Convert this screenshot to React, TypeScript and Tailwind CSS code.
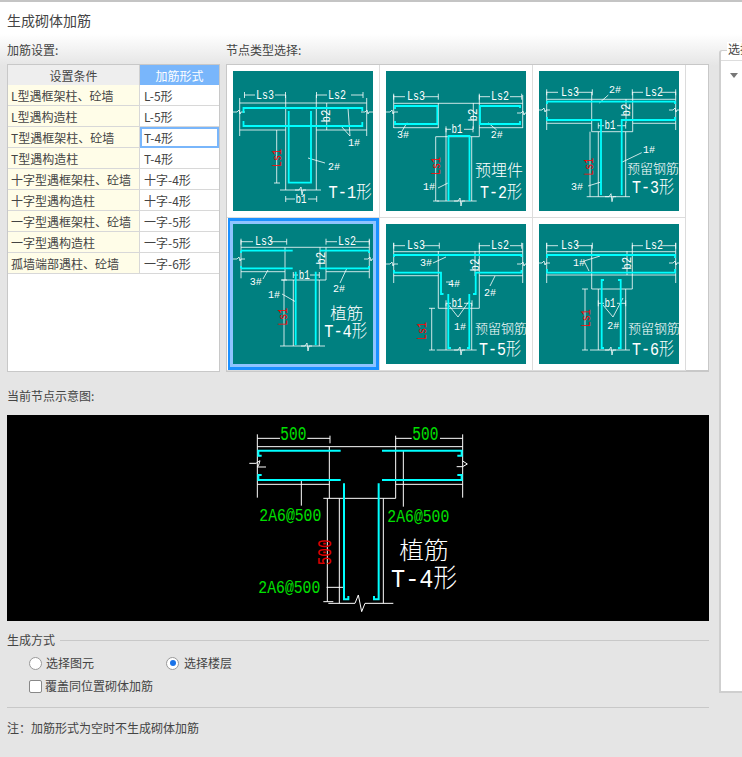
import React from 'react';

const ROWS = [
  ['L型遇框架柱、砼墙', 'L-5形'],
  ['L型遇构造柱', 'L-5形'],
  ['T型遇框架柱、砼墙', 'T-4形'],
  ['T型遇构造柱', 'T-4形'],
  ['十字型遇框架柱、砼墙', '十字-4形'],
  ['十字型遇构造柱', '十字-4形'],
  ['一字型遇框架柱、砼墙', '一字-5形'],
  ['一字型遇构造柱', '一字-5形'],
  ['孤墙端部遇柱、砼墙', '一字-6形'],
];

interface LabelProps {
  x: number;
  y: number;
  w: number;
  s?: number;
  c?: string;
  rot?: boolean;
  cjk?: boolean;
  children: string;
}

// every diagram label is real text, squeezed to the width it has in the picture
const Label: React.FC<LabelProps> = ({ x, y, w, s = 13, c = '#fff', rot, cjk, children }) => (
  <text
    x={x}
    y={y}
    fill={c}
    fontSize={s}
    fontWeight={cjk ? 300 : 400}
    fontFamily={cjk ? '"Liberation Mono", "Noto Sans CJK SC", monospace' : '"Liberation Mono", monospace'}
    textAnchor="middle"
    dominantBaseline="central"
    textLength={w}
    lengthAdjust="spacingAndGlyphs"
    transform={rot ? `rotate(-90 ${x} ${y})` : undefined}
  >
    {children}
  </text>
);

const hDim = (x1: number, x2: number, y: number, gapA: number, gapB: number) =>
  `M${x1} ${y - 3}V${y + 3}M${x2} ${y - 3}V${y + 3}M${x1} ${y}H${gapA}M${gapB} ${y}H${x2}`;

const brk = (x: number, y: number) => `M${x - 5} ${y}H${x - 1}L${x + 1} ${y - 3}L${x + 2} ${y + 5}L${x + 3} ${y}H${x + 6}`;
const sideBrk = (x: number, y: number) => `M${x - 6} ${y}H${x - 2}L${x} ${y - 2}L${x + 1} ${y + 2}L${x + 2} ${y}H${x + 6}`;

interface TileProps {
  white: string;
  cyan: string;
  children: React.ReactNode;
}

const Tile: React.FC<TileProps> = ({ white, cyan, children }) => (
  <svg width="140" height="140" viewBox="0 0 140 140" className="block bg-[#008080]">
    <path d={white} fill="none" stroke="#fff" strokeWidth="0.8" />
    <path d={cyan} fill="none" stroke="#00ffff" strokeWidth="1.8" />
    {children}
  </svg>
);

const Tiles = [
  <Tile
    key="t1"
    white={`${hDim(11.5, 52.5, 24, 22, 42)}${hDim(83.5, 130, 24, 94, 118)}M6.7 27V65M133.7 27V65M6.7 32H133.7M6.7 59H52.7M83.3 59H133.7M52.7 24V119M83.3 24V119M47 119H88M93.7 32V59M115 37L117 65M108 55L117 65M75 87L92 92M43.7 59V112M41 112H47${hDim(52.7, 83.7, 128, 62, 75)}${brk(67, 119)}${sideBrk(6, 41)}${sideBrk(134, 41)}`}
    cyan="M10.5 42V37H129.3V40M129.3 51V55H10.5V50M55.7 40V111.7H78V40"
  >
    <Label x={32} y={24} w={18}>Ls3</Label>
    <Label x={104} y={24} w={18}>Ls2</Label>
    <Label x={93.7} y={45} w={13} rot>b2</Label>
    <Label x={121} y={72} w={12} s={11}>1#</Label>
    <Label x={101} y={96} w={12} s={11}>2#</Label>
    <Label x={44} y={87} w={18} c="#f00" rot>Ls1</Label>
    <Label x={68} y={128} w={11}>b1</Label>
    <Label x={117} y={122} w={43} s={18} cjk>T-1形</Label>
  </Tile>,
  <Tile
    key="t2"
    white={`${hDim(7.7, 52.3, 25.7, 19, 37)}${hDim(93.3, 135.7, 25.7, 104, 124)}M7.7 24V57M136.7 24V57M7.7 32.3H136.7M52.3 32V57M93.3 24V65.7M7.7 56.7H52.3M93.3 56.7H136.7M49.7 65.7H93.3M60 57V130M85.7 65.7V130M50.7 130H90.7M49.7 65.7V130M47 130H53${hDim(60, 87, 58.3, 65, 78)}M87.3 32V58M21 51.7L15.7 60.7M102 51.7L110.7 59M62 112L52 117${brk(73, 130)}${sideBrk(6, 41)}${sideBrk(137, 42)}`}
    cyan="M9 38V35H51.3V53H9V50M134 37V35H94V53H134V50M62.5 130V65H83.5V130"
  >
    <Label x={30} y={25.7} w={18}>Ls3</Label>
    <Label x={114} y={25.7} w={18}>Ls2</Label>
    <Label x={87} y={44} w={13} rot>b2</Label>
    <Label x={71} y={58.3} w={11}>b1</Label>
    <Label x={17} y={64} w={12} s={11}>3#</Label>
    <Label x={110.7} y={64} w={12} s={11}>2#</Label>
    <Label x={50.7} y={95} w={18} c="#f00" rot>Ls1</Label>
    <Label x={43} y={115.7} w={12} s={11}>1#</Label>
    <Label x={113} y={101.3} w={48} s={16} cjk>预埋件</Label>
    <Label x={115} y={121.7} w={42} s={18} cjk>T-2形</Label>
  </Tile>,
  <Tile
    key="t3"
    white={`${hDim(7.7, 53.3, 21.3, 19, 37)}${hDim(93.3, 136.7, 21.3, 104, 122)}M7.7 20.7V59M136.7 20.7V59M7.7 28.3H136.7M52.7 21V60.7M93.7 21V60.7M7.7 52.3H52.7M93.7 52.3H136.7M52.7 60.7H93.7M59.3 60.7V125.7M86.7 60.7V125.7M47.7 125.7H91M51 60.7V125.7${hDim(59.3, 86.7, 54.7, 65, 78)}M87 28V52M69.3 24L60.3 32M82.7 91.3L102.7 81.7M49 115L62 111${brk(71, 125.7)}${sideBrk(5, 39)}${sideBrk(136, 39)}`}
    cyan="M8 33V30.7H136V33M8 46V49H62V124M136 46V49H82.7V124"
  >
    <Label x={31} y={21.3} w={18}>Ls3</Label>
    <Label x={115} y={21.3} w={18}>Ls2</Label>
    <Label x={76} y={19} w={12} s={11}>2#</Label>
    <Label x={87} y={39} w={13} rot>b2</Label>
    <Label x={71} y={54.7} w={11}>b1</Label>
    <Label x={110} y={79} w={12} s={11}>1#</Label>
    <Label x={38} y={116} w={12} s={11}>3#</Label>
    <Label x={50.3} y={95.7} w={18} c="#f00" rot>Ls1</Label>
    <Label x={114} y={98.3} w={52} s={13} cjk>预留钢筋</Label>
    <Label x={114} y={116.7} w={42} s={18} cjk>T-3形</Label>
  </Tile>,
  <Tile
    key="t4"
    white={`${hDim(8, 53.7, 17.7, 20, 37)}${hDim(93, 136.3, 17.7, 104, 122)}M8 16V54.3M136.3 16V54.3M8 23.3H136.3M52 23.3V56M87 23.3V45M93 23.3V56M8 47.7H52M93 47.7H136.3M48.7 56H93M60.3 56V122M86.3 56V122M47 122H92M51 56V122M48 56H54M35 46L30 55M114 44L107 59M49 70L63 78${hDim(60.3, 86.3, 51, 65, 77)}${brk(73, 122)}${sideBrk(6, 35)}${sideBrk(137, 35)}`}
    cyan="M8 26.7H59.7M87 26.7H136.3M8 44.3H59.7M87 44.3H136.3M8 29V26.7M8 42V44.3M136 29V26.7M136 42V44.3M62.7 47.7V121M82.7 47.7V121"
  >
    <Label x={31} y={17.7} w={18}>Ls3</Label>
    <Label x={114} y={17.7} w={18}>Ls2</Label>
    <Label x={88.7} y={34.3} w={13} rot>b2</Label>
    <Label x={71.3} y={51} w={11}>b1</Label>
    <Label x={22.7} y={57.7} w={12} s={11}>3#</Label>
    <Label x={106} y={65} w={12} s={11}>2#</Label>
    <Label x={41} y={71} w={12} s={11}>1#</Label>
    <Label x={50.3} y={92.7} w={18} c="#f00" rot>Ls1</Label>
    <Label x={113.7} y={91} w={33} s={16} cjk>植筋</Label>
    <Label x={112.7} y={108.3} w={43} s={18} cjk>T-4形</Label>
  </Tile>,
  <Tile
    key="t5"
    white={`${hDim(7.7, 53.3, 21.7, 19, 37)}${hDim(93.3, 135.7, 21.7, 104, 124)}M7.7 19V59M136.7 19V59M7.7 27.7H136.7M52.3 27V84.3M93.3 21V84.3M7.7 51.7H52.3M93.3 51.7H136.7M52.3 84.3H93.3M60 79.3V126M85.7 79.3V126M50.7 126H90.7M45.7 84.3V126M43 84.3H49M43 126H49M47 39L60 33M60 58H64M61 79L72 93L84 76M109 52L104 62M89 27V52${hDim(60, 86, 79.3, 65, 78)}${brk(73, 126)}${sideBrk(6, 40)}${sideBrk(137, 40)}`}
    cyan="M8 33V31H135.5V33M8 46V48.7H55V70H57.5M135.5 46V48.7H89.7V70H87M62.3 70V124H65M83.3 70V124H81"
  >
    <Label x={30} y={21.7} w={18}>Ls3</Label>
    <Label x={114} y={21.7} w={18}>Ls2</Label>
    <Label x={89} y={41} w={13} rot>b2</Label>
    <Label x={71} y={79.3} w={11}>b1</Label>
    <Label x={40} y={39.3} w={12} s={11}>3#</Label>
    <Label x={68} y={60.3} w={12} s={11}>4#</Label>
    <Label x={104} y={69.3} w={12} s={11}>2#</Label>
    <Label x={74} y={102.7} w={12} s={11}>1#</Label>
    <Label x={36.3} y={107} w={18} c="#f00" rot>Ls1</Label>
    <Label x={115} y={105} w={52} s={13} cjk>预留钢筋</Label>
    <Label x={114} y={126} w={42} s={18} cjk>T-5形</Label>
  </Tile>,
  <Tile
    key="t6"
    white={`${hDim(7.7, 53.3, 21.7, 19, 37)}${hDim(93.3, 136.7, 21.7, 104, 122)}M7.7 19V59M136.7 19V59M7.7 27.7H136.7M7.7 51H136.7M52.7 21V65M93.3 21V65M88 27V51M52.7 65H93.3M59.3 65V126M86.7 65V126M51 126H91M46 65V126M43 65H49M43 126H49M50 47L45 37M45 37L61 32M64 81L74 93L84 74${hDim(59.3, 86.7, 79.3, 65, 78)}${brk(71, 126)}${sideBrk(5, 39)}${sideBrk(136, 39)}`}
    cyan="M8 34V31H136V34M8 45V48.7H136V45M65 56H62.7V124H65M79 56H81.7V124H79"
  >
    <Label x={31} y={21.7} w={18}>Ls3</Label>
    <Label x={115} y={21.7} w={18}>Ls2</Label>
    <Label x={88.3} y={39.3} w={13} rot>b2</Label>
    <Label x={71} y={79.3} w={11}>b1</Label>
    <Label x={40} y={39.3} w={12} s={11}>1#</Label>
    <Label x={74.3} y={102} w={12} s={11}>2#</Label>
    <Label x={47.7} y={94.3} w={18} c="#f00" rot>Ls1</Label>
    <Label x={115} y={105} w={52} s={13} cjk>预留钢筋</Label>
    <Label x={114} y={126} w={42} s={18} cjk>T-6形</Label>
  </Tile>,
];

const Preview = () => (
  <svg width="702" height="206" viewBox="0 0 702 206" className="block bg-black">
    <g transform="translate(223 0) scale(0.33333)">
      <path
        d="M82 95H698M82 58V248M698 58V248M298 95V250M497 62V250M82 208H298M497 208H698M280 250H497M328 250V565M460 250V565M295 565H375L385 540L395 590L405 565H490M292 250V560M280 560H310M82 70H150M232 70H300M300 62V85M497 70H545M630 70H698M214 197V272M520 108V275M290 517H342M58 145H78L90 137L86 150L82 156H108M680 155H698L712 147L698 138"
        fill="none"
        stroke="#fff"
        strokeWidth="3"
      />
      <path
        d="M95 122H85V107H332M456 107H695V122H682M95 180H85V195H332M456 195H695V180H682M342 205V553H355V543M446 205V553H432V543"
        fill="none"
        stroke="#00ffff"
        strokeWidth="6"
      />
      <Label x={190} y={60} w={78} s={62} c="#00e000">500</Label>
      <Label x={586} y={58} w={78} s={62} c="#00e000">500</Label>
      <Label x={181} y={304} w={186} s={54} c="#00e000">2A6@500</Label>
      <Label x={565} y={306} w={186} s={54} c="#00e000">2A6@500</Label>
      <Label x={178} y={520} w={186} s={54} c="#00e000">2A6@500</Label>
      <Label x={287} y={412} w={78} s={62} c="#e00000" rot>500</Label>
      <Label x={582} y={412} w={148} s={72} cjk>植筋</Label>
      <Label x={582} y={495} w={198} s={80} cjk>T-4形</Label>
    </g>
  </svg>
);

const App: React.FC = () => {
  return (
    <div className="relative h-[757px] w-[742px] overflow-hidden border-t-2 border-[#c4c4c4] bg-[linear-gradient(#fff_0,#fff_32px,#e5e5e5_64px)] font-['Noto_Sans_CJK_SC',sans-serif] text-xs text-[#444]">
      <div className="flex h-[37px] items-center pb-[2px] pl-[7px] text-sm">生成砌体加筋</div>
      <div className="flex">
        <div className="ml-[7px] w-[702px] shrink-0">
          <div className="flex gap-[6px]">
            <div className="w-[213px] shrink-0">
              <div className="flex h-[25px] items-center pb-[3px]">加筋设置:</div>
              <div className="h-[308px] border border-[#c8c8c8] bg-white">
                <div className="flex h-[20px] text-center">
                  <div className="w-[132px] border-r border-[#d0d0d0] bg-[#eeeeee] leading-[22px]">设置条件</div>
                  <div className="flex-1 bg-[#79b6fb] leading-[22px] text-white">加筋形式</div>
                </div>
                {ROWS.map(([a, b], i) => (
                  <div key={a} className="flex h-[21px] border-b border-[#d8d8d8]">
                    <div className="w-[132px] truncate border-r border-[#d8d8d8] bg-[#fffde8] pl-[3px] leading-[22px]">{a}</div>
                    <div className={i === 2 ? 'mb-[-1px] flex-1 border-2 border-[#79b6fb] pl-[2px] leading-[18px]' : 'flex-1 pl-1 leading-[22px]'}>{b}</div>
                  </div>
                ))}
              </div>
            </div>
            <div className="flex-1">
              <div className="flex h-[25px] items-center pb-[3px]">节点类型选择:</div>
              <div className="h-[308px] border border-b-2 border-[#c8c8c8] bg-white">
                <div className="grid w-[459px] grid-cols-3">
                  {Tiles.map((t, i) => (
                    <div key={i} className={i === 3 ? 'border-r border-b border-[#dcdcdc] pl-px' : 'border-r border-b border-[#dcdcdc] p-[6px]'}>
                      {i === 3 ? (
                        <div className="border-[3px] border-l-2 border-[#1a90ff]">
                          <div className="border-[3px] border-[#8fc4ff]">{t}</div>
                        </div>
                      ) : (
                        t
                      )}
                    </div>
                  ))}
                </div>
              </div>
            </div>
          </div>
          <div className="flex h-[43px] items-center pt-[5px]">当前节点示意图:</div>
          <Preview />
          <div className="mt-[11px] flex items-center gap-[5px] leading-4">
            <span>生成方式</span>
            <div className="h-px flex-1 bg-[#c8c8c8]" />
          </div>
          <div className="mt-[5px] flex h-5 items-center pl-[22px]">
            <span className="h-[13px] w-[13px] rounded-full border border-[#999] bg-white" />
            <span className="ml-[4px] w-[120px]">选择图元</span>
            <span className="flex h-[13px] w-[13px] items-center justify-center rounded-full border border-[#999] bg-white">
              <span className="h-[6px] w-[6px] rounded-full bg-[#1a73e8]" />
            </span>
            <span className="ml-[5px]">选择楼层</span>
          </div>
          <div className="mt-[3px] flex h-5 items-center pl-[22px]">
            <span className="h-[13px] w-[13px] rounded-[2px] border border-[#888] bg-white" />
            <span className="ml-[3px]">覆盖同位置砌体加筋</span>
          </div>
          <div className="mt-[11px] h-px bg-[#c8c8c8]" />
          <div className="mt-3 leading-4">注：加筋形式为空时不生成砌体加筋</div>
        </div>
        <div className="ml-[10px] flex-1">
          <div className="relative mt-[11px] h-[643px] w-[40px] rounded-tl-[3px] border border-r-0 border-b-2 border-l-2 border-[#cfcfcf] bg-white">
            <span className="absolute left-[6px] top-[-9px] whitespace-nowrap bg-white px-px leading-[14px]">选择</span>
            <span className="absolute left-0 right-0 top-[9px] h-px bg-[#dddddd]" />
            <span className="absolute left-[9px] top-[22px] h-0 w-0 border-x-[4px] border-t-[5px] border-x-transparent border-t-[#777]" />
          </div>
        </div>
      </div>
    </div>
  );
};

export default App;
